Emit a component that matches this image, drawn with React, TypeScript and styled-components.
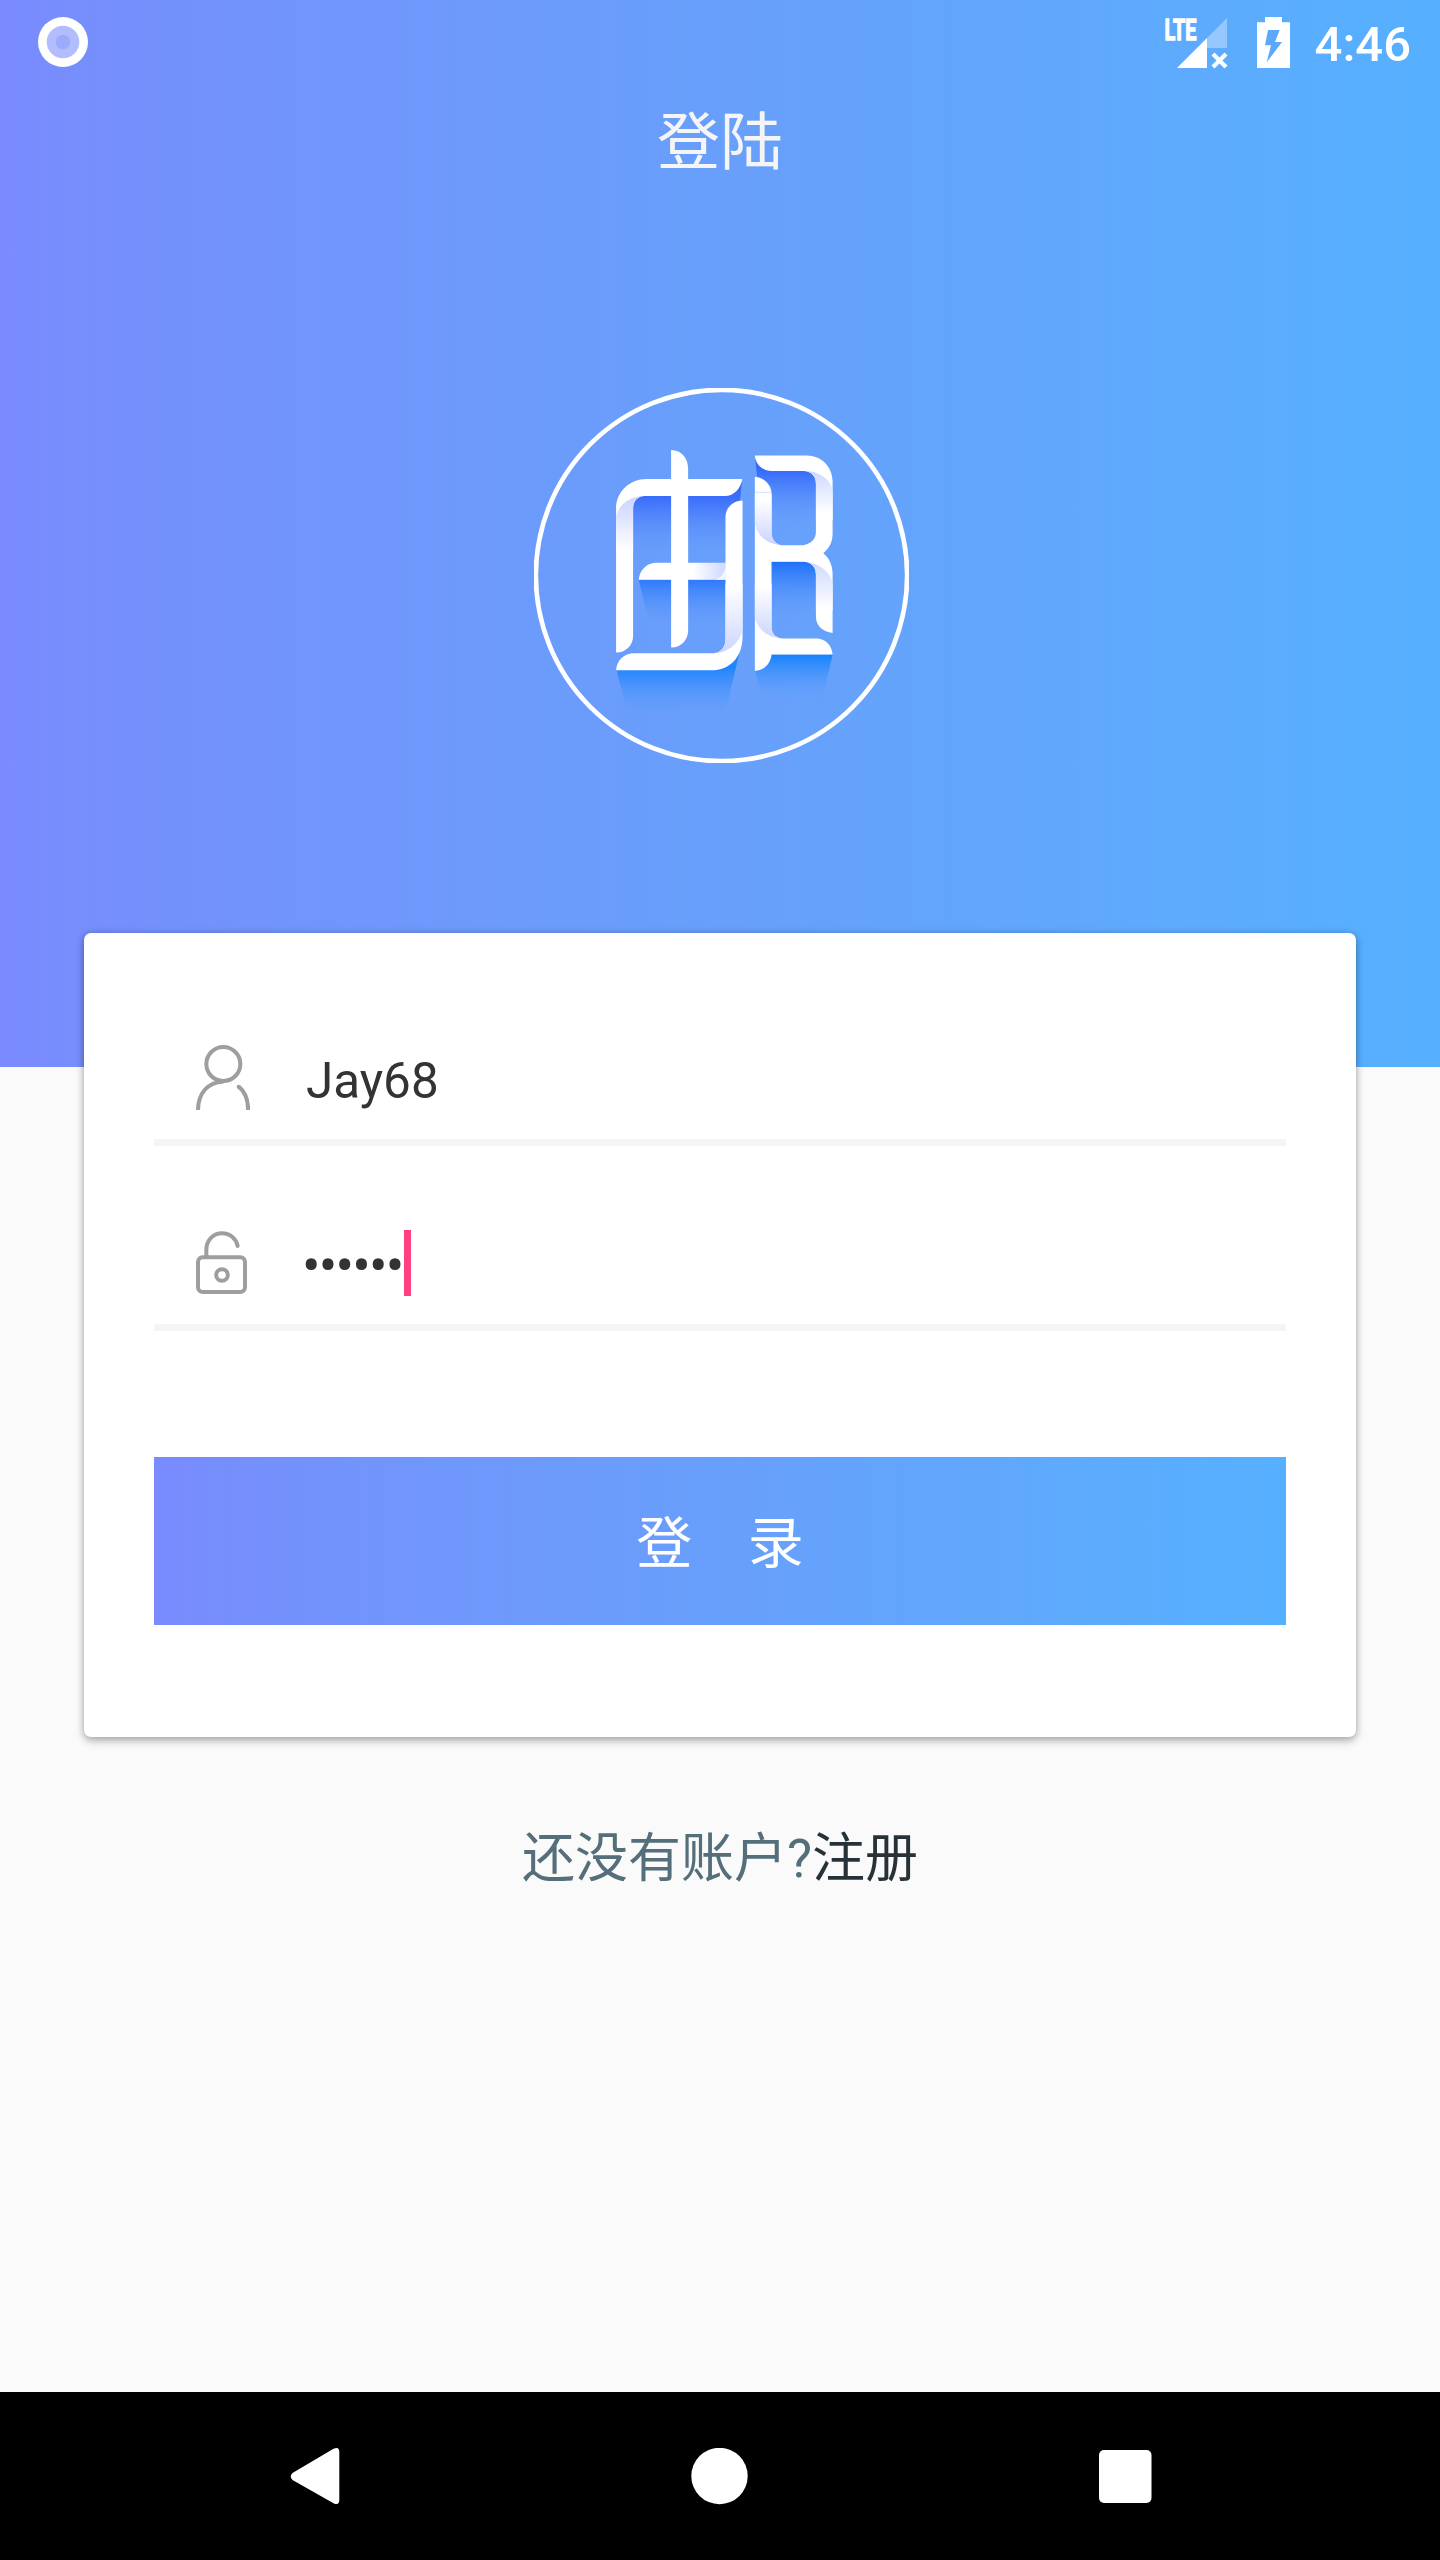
import React from 'react';
import styled, { createGlobalStyle } from 'styled-components';

const Global = createGlobalStyle`
  * { box-sizing: border-box; }
  body { margin: 0; background: #fafafa; }
`;

const brandGradient = 'linear-gradient(90deg, #7a8bff 0%, #758ffb 8%, #7097fb 25%, #689ffb 50%, #5eaafd 80%, #56b0ff 100%)';

const Screen = styled.div`
  display: flex;
  flex-direction: column;
  width: 1440px;
  height: 2560px;
  overflow: hidden;
  background: #fafafa;
  font-family: Roboto, 'Noto Sans CJK SC', sans-serif;
`;

const Header = styled.header`
  flex: none;
  display: flex;
  flex-direction: column;
  align-items: center;
  height: 1067px;
  background: ${brandGradient};
`;

const StatusBar = styled.div`
  display: flex;
  justify-content: space-between;
  align-items: center;
  width: 100%;
  height: 84px;
  padding: 0 29px 0 38px;
`;

const StatusGroup = styled.div`
  display: flex;
  align-items: center;
`;

const Clock = styled.span`
  margin-left: 25px;
  padding-top: 5px;
  color: #fff;
  font-size: 49px;
  line-height: 58px;
  font-weight: 500;
`;

const Title = styled.h1`
  margin: 3px 0 189px;
  height: 112px;
  line-height: 112px;
  color: #f5f5f5;
  font-size: 63px;
  font-weight: 400;
`;

const Card = styled.main`
  flex: none;
  display: flex;
  flex-direction: column;
  width: 1272px;
  height: 804px;
  margin: -134px auto 0;
  padding: 28px 70px 0;
  border-radius: 7px;
  background: #fff;
  box-shadow: 0 4px 9px rgba(0, 0, 0, 0.28), 0 0 7px rgba(0, 0, 0, 0.14);
`;

const Field = styled.div`
  display: flex;
  align-items: center;
  height: 185px;
  padding: 55px 0 0 42px;
  border-bottom: 7px solid #f5f5f5;
`;

const IconSlot = styled.div`
  display: flex;
  width: 110px;
`;

const FieldText = styled.span`
  padding-top: 6px;
  color: #333;
  font-size: 49.4px;
  line-height: 58px;
`;

const PasswordText = styled(FieldText)`
  width: 98px;
  margin-left: -4px;
  padding-top: 7px;
  font-size: 55px;
  letter-spacing: -1.8px;
  white-space: nowrap;
`;

const Caret = styled.i`
  width: 7px;
  height: 66px;
  margin: 1px 0 0 4px;
  background: #ff4081;
`;

const LoginButton = styled.button`
  height: 168px;
  margin-top: 126px;
  padding: 0 0 6px;
  border: 0;
  background: ${brandGradient};
  color: #fff;
  font-family: inherit;
  font-size: 56px;
  white-space: pre;
`;

const SignUp = styled.p`
  display: flex;
  justify-content: center;
  margin: 83px 0 0;
  color: #546e7a;
  font-size: 53px;
  line-height: 78px;
`;

const SignUpLink = styled.a`
  color: #263238;
`;

const NavBar = styled.nav`
  display: flex;
  justify-content: space-between;
  align-items: center;
  height: 168px;
  margin-top: auto;
  padding: 0 288px 0 290px;
  background: #000;
`;

const Svg = styled.svg`
  display: block;
  flex: none;
`;

const LogoSlot = styled.div`
  padding-left: 3px;
`;

const BatterySlot = styled.div`
  margin-left: 29px;
`;

const RecordDot = () => (
  <Svg width="50" height="50" viewBox="0 0 50 50">
    <circle cx="25" cy="25" r="25" fill="#fff" />
    <circle cx="25" cy="25" r="16.3" fill="#b1bdfd" />
    <circle cx="25" cy="25" r="7.3" fill="#9dabfb" />
  </Svg>
);

const Signal = () => (
  <Svg width="66" height="71" viewBox="-3 -10 66 71">
    <text x="-.5" y="23" fill="#fff" stroke="#fff" strokeWidth="1.300" fontFamily="Roboto, sans-serif" fontSize="29.500" fontWeight="700" textLength="32" lengthAdjust="spacingAndGlyphs">LTE</text>
    <path d="M42 21 62 1v30H42z" fill="#fff" fillOpacity=".35" />
    <path d="M12 51 42 21v30z" fill="#fff" />
    <path d="M48 37 61 50M61 37 48 50" stroke="#fff" strokeWidth="4.200" fill="none" />
  </Svg>
);

const Battery = () => (
  <Svg width="33" height="51" viewBox="0 0 99 153">
    <path d="M24 0h51v16h24v137H0V16h24z" fill="#fff" />
    <path d="M33 39h35L54 75h21l-46 61 13-51H24z" fill="#5ba9fc" />
  </Svg>
);

type FadeProps = { id: string; from: string; to: string; start: number; end: number; horizontal?: boolean; fade?: boolean };

const Fade = ({ id, from, to, start, end, horizontal, fade }: FadeProps) => (
  <linearGradient id={id} gradientUnits="userSpaceOnUse" x1={horizontal ? start : 0} x2={horizontal ? end : 0} y1={horizontal ? 0 : start} y2={horizontal ? 0 : end}>
    <stop offset="0" stopColor={from} />
    <stop offset="1" stopColor={to} stopOpacity={fade ? 0 : 1} />
  </linearGradient>
);

const Logo = () => (
  <Svg width="375" height="375" viewBox="43 54 1124 1124">
    <defs>
      <Fade id="s1" from="#386bfa" to="#689ffb" start={376} end={570} fade />
      <Fade id="s2" from="#2e7af9" to="#689ffb" start={629} end={775} fade />
      <Fade id="s3" from="#2286fb" to="#689ffb" start={895} end={1045} fade />
      <Fade id="s4" from="#1482fc" to="#689ffb" start={853} end={995} fade />
      <Fade id="s5" from="#386bfa" to="#689ffb" start={303} end={480} fade />
      <Fade id="s6" from="#1f70fa" to="#689ffb" start={575} end={755} fade />
      <Fade id="f1" from="#d2daff" to="#fff" start={405} end={540} />
      <Fade id="f2" from="#fff" to="#cdd8ff" start={520} end={617} horizontal />
      <Fade id="f3" from="#fff" to="#ced7ff" start={650} end={840} />
      <Fade id="f4" from="#ced9ff" to="#fff" start={303} end={430} />
      <Fade id="f5" from="#ced9ff" to="#fff" start={578} end={715} />
      <Fade id="f6" from="#fff" to="#ced7ff" start={390} end={515} />
      <Fade id="f7" from="#fff" to="#ced7ff" start={650} end={800} />
    </defs>
    <circle cx="605" cy="616" r="556.500" fill="none" stroke="#fff" strokeWidth="14" />

    <path d="M330 370H620L666 335L660 400L625 430V580H340V390Z" fill="url(#s1)" />
    <path d="M357 629H620V780H392Z" fill="url(#s2)" />
    <path d="M289 895H575L658 850L612 1045H328Z" fill="url(#s3)" />
    <path d="M705 900L752 853H938L905 995H732Z" fill="url(#s4)" />
    <path d="M706 270L750 300H890V525H755V350L712 320Z" fill="url(#s5)" />
    <path d="M752 575H890V808H752Z" fill="url(#s6)" />

    <path d="M667 327C663 355 643 378 615 378H375C355 378 340 392 340 415V797C340 825 318 847 289 847V415C289 365 330 327 380 327Z" fill="#fff" />
    <path d="M289 440C298 402 330 378 375 378C352 379 340 395 340 415V540H289Z" fill="url(#f1)" />
    <path d="M357 629C359 600 380 578 412 578H618V629Z" fill="url(#f2)" />
    <path d="M617 585C615 610 600 629 578 629H618Z" fill="#f3f5ff" />
    <path d="M454 240C485 240 505 265 505 297V780C505 808 485 832 454 832Z" fill="#fff" />
    <path d="M668 391V800C668 860 630 900 575 900H289C291 870 312 849 345 849H580C605 849 617 830 617 805V440C617 413 640 391 668 391Z" fill="#fff" />
    <path d="M617 640H668V780C658 820 625 848 580 849C605 846 617 830 617 805Z" fill="url(#f3)" />

    <path d="M705 256H860C905 256 938 290 938 335V490C938 515 928 535 910 549C928 563 938 585 938 612V788C910 786 888 768 888 740V612C888 590 872 575 850 575H755V775C757 792 770 805 790 805H890C915 805 936 825 938 853H755C752 880 735 900 705 902V320C735 323 755 345 755 375V490C757 510 770 525 785 525H850C873 522 888 507 888 485V340C888 318 872 303 850 303H755C730 303 708 285 705 256Z" fill="#fff" />
    <path d="M855 303C895 303 930 325 938 360V450H888V340C888 318 872 303 855 303Z" fill="url(#f4)" />
    <path d="M855 575C895 580 930 600 938 640V720H888V612C888 590 872 575 855 575Z" fill="url(#f5)" />
    <path d="M705 372H755V490C757 510 770 525 790 525C745 525 712 500 705 460Z" fill="url(#f6)" />
    <path d="M705 640H755V775C757 792 770 805 790 805C745 803 712 780 705 740Z" fill="url(#f7)" />
    <path d="M705 367H755" stroke="#dde6ff" strokeWidth="4" />
  </Svg>
);

const UserIcon = () => (
  <Svg width="54" height="65" viewBox="378 375 162 195" fill="none" stroke="#9e9e9e" strokeWidth="12">
    <circle cx="460" cy="432" r="51" />
    <path d="M384 571C384 520 413 486 460 485" />
    <path d="M506 500C525 515 534.500 540 534.500 571" />
    <circle cx="506" cy="500" r="6" fill="#9e9e9e" stroke="none" />
  </Svg>
);

const LockIcon = () => (
  <Svg width="51" height="63" viewBox="378 933 153 189" fill="none" stroke="#9e9e9e" strokeWidth="12">
    <rect x="384" y="1012" width="141" height="104" rx="14" />
    <path d="M409 1010V990C409 960 430 940 456 940C480 940 498 955 503 978" strokeLinecap="round" />
    <circle cx="456" cy="1065" r="17.500" />
  </Svg>
);

const BackIcon = () => (
  <Svg width="50" height="58" viewBox="0 0 50 58">
    <path d="M2.500 26 43.500 1.800Q49.300-1 49.300 5V53Q49.300 59 43.500 56.200L2.500 33Q-1 29.500 2.500 26Z" fill="#fff" />
  </Svg>
);

const HomeIcon = () => (
  <Svg width="57" height="57" viewBox="0 0 57 57">
    <circle cx="28.500" cy="28" r="28.200" fill="#fff" />
  </Svg>
);

const RecentsIcon = () => (
  <Svg width="53" height="53" viewBox="0 0 53 53">
    <rect width="52.500" height="53" rx="5" fill="#fff" />
  </Svg>
);

export default function App() {
  return (
    <Screen>
      <Global />
      <Header>
        <StatusBar>
          <RecordDot />
          <StatusGroup>
            <Signal />
            <BatterySlot><Battery /></BatterySlot>
            <Clock>4:46</Clock>
          </StatusGroup>
        </StatusBar>
        <Title>登陆</Title>
        <LogoSlot><Logo /></LogoSlot>
      </Header>
      <Card>
        <Field>
          <IconSlot><UserIcon /></IconSlot>
          <FieldText>Jay68</FieldText>
        </Field>
        <Field>
          <IconSlot><LockIcon /></IconSlot>
          <PasswordText>••••••</PasswordText>
          <Caret />
        </Field>
        <LoginButton>{'登    录'}</LoginButton>
      </Card>
      <SignUp>
        <span>还没有账户?</span>
        <SignUpLink>注册</SignUpLink>
      </SignUp>
      <NavBar>
        <BackIcon />
        <HomeIcon />
        <RecentsIcon />
      </NavBar>
    </Screen>
  );
}
